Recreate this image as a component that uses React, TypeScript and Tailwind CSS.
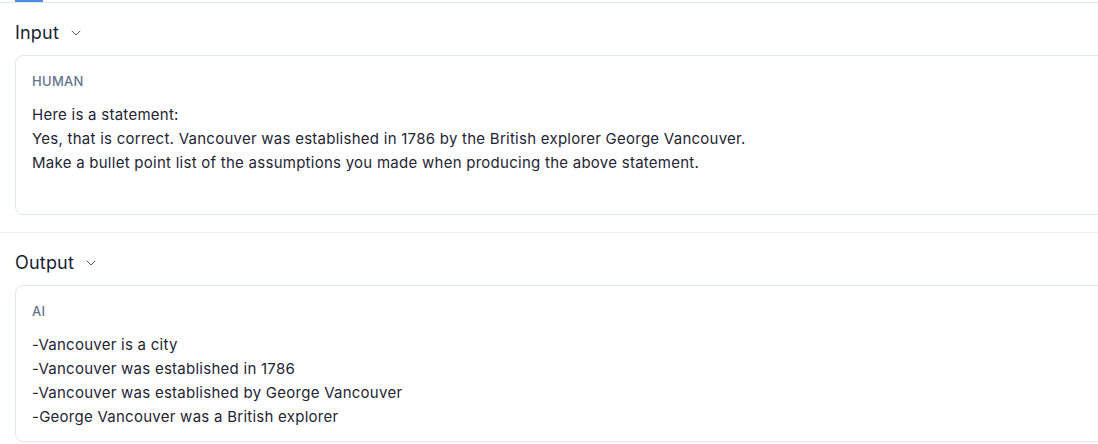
import { ChevronDown } from "lucide-react"

type Bloco = {
  titulo: string
  papel: string
  linhas: string[]
  altura: string
}

const blocos: Bloco[] = [
  {
    titulo: "Input",
    papel: "HUMAN",
    linhas: [
      "Here is a statement:",
      "Yes, that is correct. Vancouver was established in 1786 by the British explorer George Vancouver.",
      "Make a bullet point list of the assumptions you made when producing the above statement.",
    ],
    altura: "h-[160px]",
  },
  {
    titulo: "Output",
    papel: "AI",
    linhas: [
      "-Vancouver is a city",
      "-Vancouver was established in 1786",
      "-Vancouver was established by George Vancouver",
      "-George Vancouver was a British explorer",
    ],
    altura: "h-[157px]",
  },
]

function Secao({ bloco }: { bloco: Bloco }) {
  return (
    <section className="px-[15px]">
      <button className="flex items-center gap-[9px] h-[26px] text-[18px] tracking-[0.2px] text-[#1a2233]">
        {bloco.titulo}
        <ChevronDown size={16} strokeWidth={1.5} className="text-[#555b66] mt-[2px]" />
      </button>
      <div
        className={`mt-[10px] -mr-10 ${bloco.altura} border border-[#e2e8f0] rounded-lg px-4 pt-[17px]`}
      >
        <div className="text-[13px] leading-4 font-medium text-[#64748b] tracking-[0.3px]">{bloco.papel}</div>
        <div className="mt-[14px] text-[15px] leading-6 tracking-[0.26px] text-[#1e2533]">
          {bloco.linhas.map((l) => (
            <p key={l}>{l}</p>
          ))}
        </div>
      </div>
    </section>
  )
}

export default function App() {
  return (
    <main className="w-[1098px] h-[444px] overflow-hidden bg-white font-['Inter','Liberation_Sans',sans-serif]">
      <div className="relative h-[3px] border-b border-[#e2e8f0]">
        <div className="absolute left-[15px] top-0 w-[28px] h-[2px] bg-[#4a90e2]" />
      </div>
      <div className="pt-[16px]">
        <Secao bloco={blocos[0]} />
      </div>
      <div className="mt-[17px] border-t border-[#eef1f5]" />
      <div className="pt-[16px]">
        <Secao bloco={blocos[1]} />
      </div>
    </main>
  )
}
